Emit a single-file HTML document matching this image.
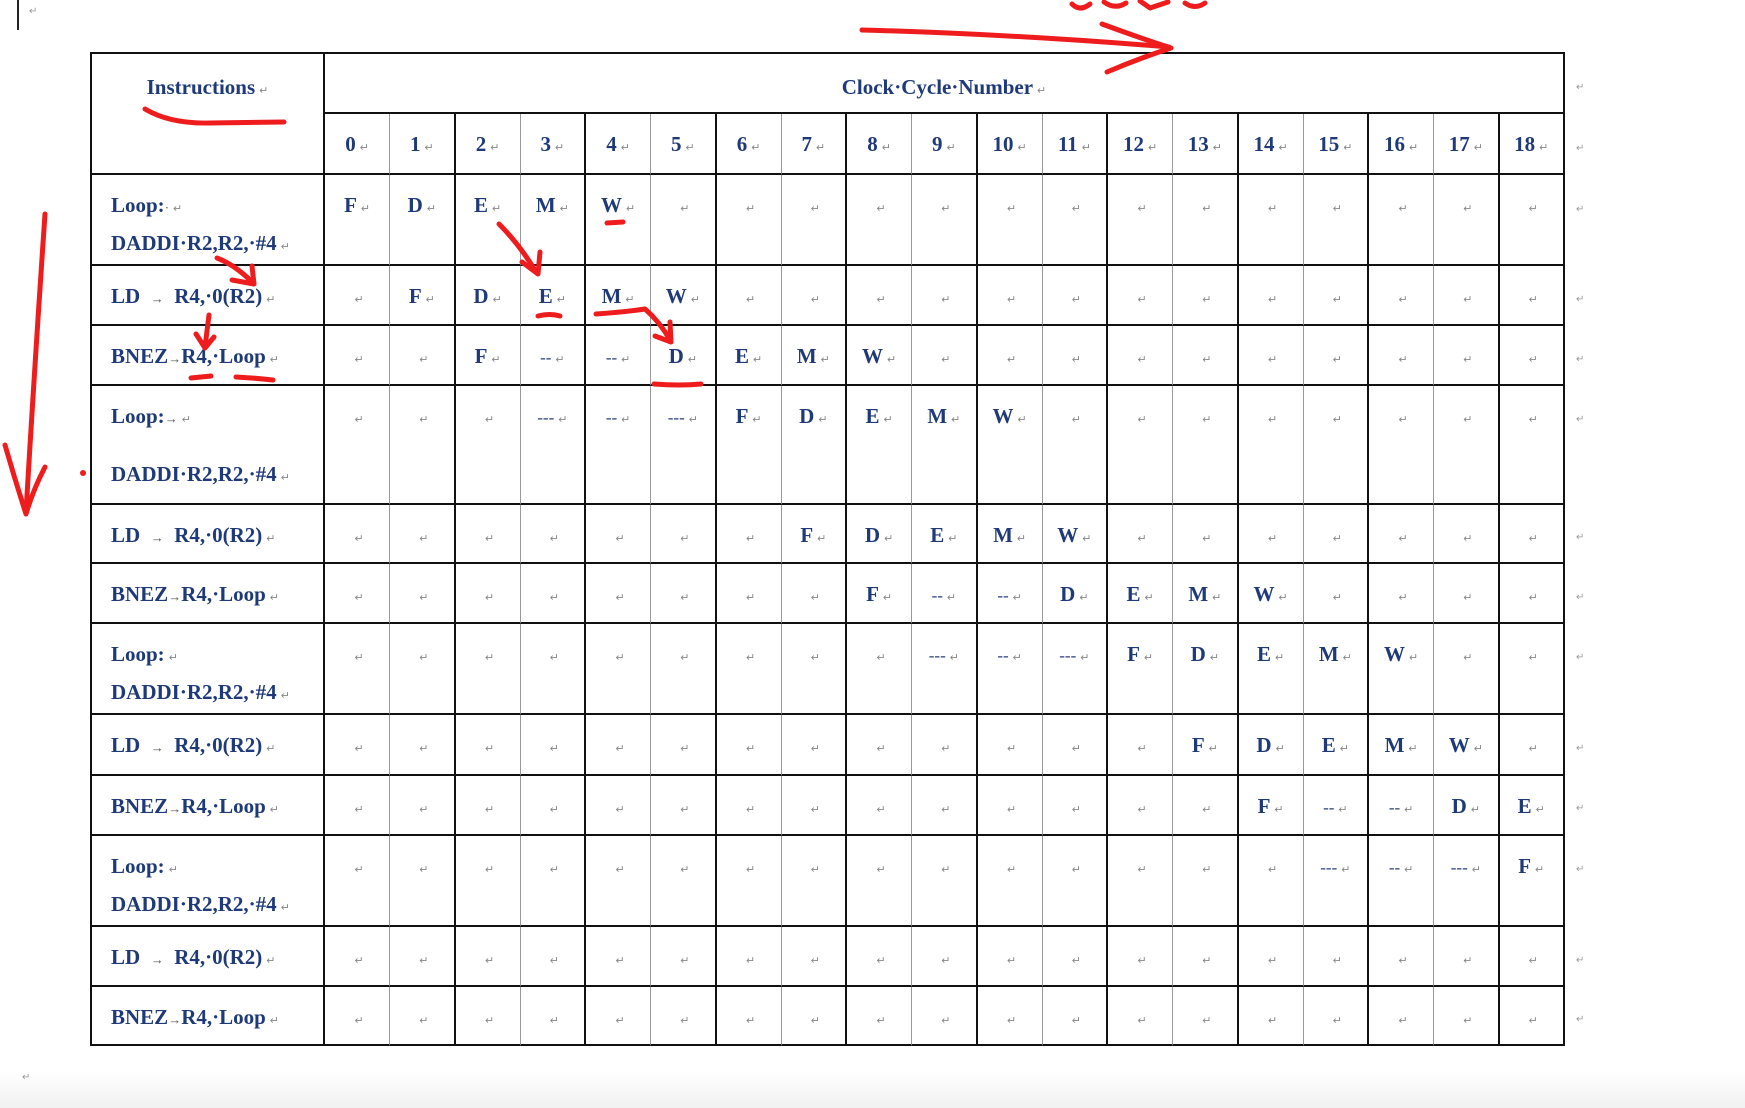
<!DOCTYPE html>
<html><head><meta charset="utf-8">
<style>
html,body{margin:0;padding:0;width:1745px;height:1108px;overflow:hidden;background:#fff;position:relative;font-family:"Liberation Serif",serif;}
#bot{position:absolute;left:0;top:1070px;width:1745px;height:38px;background:linear-gradient(#fff,#f1f1f1);}
table{position:absolute;left:90px;top:52px;width:1475px;border-collapse:separate;border-spacing:0;table-layout:fixed;border-top:2px solid #111;border-left:2px solid #111;}
td{border-right:2px solid #111;border-bottom:2px solid #111;padding:0;vertical-align:top;text-align:center;color:#1e3a78;font-weight:bold;font-size:21px;line-height:22px;box-sizing:border-box;}
td div.c{padding-top:19px;white-space:nowrap;}
i{font-style:normal;font-weight:normal;color:#888;font-size:11px;margin-left:4px;}
b{font-weight:normal;font-size:17px;color:#2a3f77;}
tr.r td:nth-child(even){border-right:1px solid #999;}
tr.r td:last-child{border-right:2px solid #111;}
tr.n td:nth-child(odd){border-right:1px solid #999;}
tr.n td:last-child{border-right:2px solid #111;}
td.ins{text-align:left;}
td.ins div{position:relative;white-space:nowrap;padding-left:19px;}
td.ins div span.b{position:absolute;left:19px;}
.dot{color:#555;font-weight:normal;font-size:13px;}
.rm{position:absolute;left:1576px;color:#999;font-size:10px;}
</style></head><body>
<div id="bot"></div>
<div style="position:absolute;left:17px;top:0;width:2px;height:30px;background:#222"></div>
<div style="position:absolute;left:29px;top:6px;color:#999;font-size:10px">↵</div>
<table>
<colgroup><col style="width:233px"><col span="19"></colgroup>
<tr style="height:60px"><td rowspan="2" style="vertical-align:top"><div class="c" style="padding-top:22px">Instructions<i>↵</i></div></td><td colspan="19"><div class="c" style="padding-top:22px">Clock·Cycle·Number<i>↵</i></div></td></tr>
<tr class="n" style="height:61px"><td><div class="c">0<i>↵</i></div></td><td><div class="c">1<i>↵</i></div></td><td><div class="c">2<i>↵</i></div></td><td><div class="c">3<i>↵</i></div></td><td><div class="c">4<i>↵</i></div></td><td><div class="c">5<i>↵</i></div></td><td><div class="c">6<i>↵</i></div></td><td><div class="c">7<i>↵</i></div></td><td><div class="c">8<i>↵</i></div></td><td><div class="c">9<i>↵</i></div></td><td><div class="c">10<i>↵</i></div></td><td><div class="c">11<i>↵</i></div></td><td><div class="c">12<i>↵</i></div></td><td><div class="c">13<i>↵</i></div></td><td><div class="c">14<i>↵</i></div></td><td><div class="c">15<i>↵</i></div></td><td><div class="c">16<i>↵</i></div></td><td><div class="c">17<i>↵</i></div></td><td><div class="c">18<i>↵</i></div></td></tr>

<tr class="r" style="height:91px"><td class="ins"><div style="height:89px;padding-top:19px;box-sizing:border-box">Loop:<span class="dot">·</span><i>↵</i><span class="b" style="bottom:6px">DADDI·R2,R2,·#4<i>↵</i></span></div></td><td><div class="c">F<i>↵</i></div></td><td><div class="c">D<i>↵</i></div></td><td><div class="c">E<i>↵</i></div></td><td><div class="c">M<i>↵</i></div></td><td><div class="c">W<i>↵</i></div></td><td><div class="c"><i>↵</i></div></td><td><div class="c"><i>↵</i></div></td><td><div class="c"><i>↵</i></div></td><td><div class="c"><i>↵</i></div></td><td><div class="c"><i>↵</i></div></td><td><div class="c"><i>↵</i></div></td><td><div class="c"><i>↵</i></div></td><td><div class="c"><i>↵</i></div></td><td><div class="c"><i>↵</i></div></td><td><div class="c"><i>↵</i></div></td><td><div class="c"><i>↵</i></div></td><td><div class="c"><i>↵</i></div></td><td><div class="c"><i>↵</i></div></td><td><div class="c"><i>↵</i></div></td></tr>

<tr class="r" style="height:60px"><td class="ins"><div style="padding-top:19px">LD &nbsp;<span class="dot">→</span> &nbsp;R4,·0(R2)<i>↵</i></div></td><td><div class="c"><i>↵</i></div></td><td><div class="c">F<i>↵</i></div></td><td><div class="c">D<i>↵</i></div></td><td><div class="c">E<i>↵</i></div></td><td><div class="c">M<i>↵</i></div></td><td><div class="c">W<i>↵</i></div></td><td><div class="c"><i>↵</i></div></td><td><div class="c"><i>↵</i></div></td><td><div class="c"><i>↵</i></div></td><td><div class="c"><i>↵</i></div></td><td><div class="c"><i>↵</i></div></td><td><div class="c"><i>↵</i></div></td><td><div class="c"><i>↵</i></div></td><td><div class="c"><i>↵</i></div></td><td><div class="c"><i>↵</i></div></td><td><div class="c"><i>↵</i></div></td><td><div class="c"><i>↵</i></div></td><td><div class="c"><i>↵</i></div></td><td><div class="c"><i>↵</i></div></td></tr>

<tr class="r" style="height:60px"><td class="ins"><div style="padding-top:19px">BNEZ<span class="dot">→</span>R4,·Loop<i>↵</i></div></td><td><div class="c"><i>↵</i></div></td><td><div class="c"><i>↵</i></div></td><td><div class="c">F<i>↵</i></div></td><td><div class="c"><b>--</b><i>↵</i></div></td><td><div class="c"><b>--</b><i>↵</i></div></td><td><div class="c">D<i>↵</i></div></td><td><div class="c">E<i>↵</i></div></td><td><div class="c">M<i>↵</i></div></td><td><div class="c">W<i>↵</i></div></td><td><div class="c"><i>↵</i></div></td><td><div class="c"><i>↵</i></div></td><td><div class="c"><i>↵</i></div></td><td><div class="c"><i>↵</i></div></td><td><div class="c"><i>↵</i></div></td><td><div class="c"><i>↵</i></div></td><td><div class="c"><i>↵</i></div></td><td><div class="c"><i>↵</i></div></td><td><div class="c"><i>↵</i></div></td><td><div class="c"><i>↵</i></div></td></tr>

<tr class="r" style="height:119px"><td class="ins"><div style="height:117px;padding-top:19px;box-sizing:border-box">Loop:<span class="dot">→</span><i>↵</i><span class="b" style="bottom:14px">DADDI·R2,R2,·#4<i>↵</i></span></div></td><td><div class="c"><i>↵</i></div></td><td><div class="c"><i>↵</i></div></td><td><div class="c"><i>↵</i></div></td><td><div class="c"><b>---</b><i>↵</i></div></td><td><div class="c"><b>--</b><i>↵</i></div></td><td><div class="c"><b>---</b><i>↵</i></div></td><td><div class="c">F<i>↵</i></div></td><td><div class="c">D<i>↵</i></div></td><td><div class="c">E<i>↵</i></div></td><td><div class="c">M<i>↵</i></div></td><td><div class="c">W<i>↵</i></div></td><td><div class="c"><i>↵</i></div></td><td><div class="c"><i>↵</i></div></td><td><div class="c"><i>↵</i></div></td><td><div class="c"><i>↵</i></div></td><td><div class="c"><i>↵</i></div></td><td><div class="c"><i>↵</i></div></td><td><div class="c"><i>↵</i></div></td><td><div class="c"><i>↵</i></div></td></tr>

<tr class="r" style="height:59px"><td class="ins"><div style="padding-top:19px">LD &nbsp;<span class="dot">→</span> &nbsp;R4,·0(R2)<i>↵</i></div></td><td><div class="c"><i>↵</i></div></td><td><div class="c"><i>↵</i></div></td><td><div class="c"><i>↵</i></div></td><td><div class="c"><i>↵</i></div></td><td><div class="c"><i>↵</i></div></td><td><div class="c"><i>↵</i></div></td><td><div class="c"><i>↵</i></div></td><td><div class="c">F<i>↵</i></div></td><td><div class="c">D<i>↵</i></div></td><td><div class="c">E<i>↵</i></div></td><td><div class="c">M<i>↵</i></div></td><td><div class="c">W<i>↵</i></div></td><td><div class="c"><i>↵</i></div></td><td><div class="c"><i>↵</i></div></td><td><div class="c"><i>↵</i></div></td><td><div class="c"><i>↵</i></div></td><td><div class="c"><i>↵</i></div></td><td><div class="c"><i>↵</i></div></td><td><div class="c"><i>↵</i></div></td></tr>

<tr class="r" style="height:60px"><td class="ins"><div style="padding-top:19px">BNEZ<span class="dot">→</span>R4,·Loop<i>↵</i></div></td><td><div class="c"><i>↵</i></div></td><td><div class="c"><i>↵</i></div></td><td><div class="c"><i>↵</i></div></td><td><div class="c"><i>↵</i></div></td><td><div class="c"><i>↵</i></div></td><td><div class="c"><i>↵</i></div></td><td><div class="c"><i>↵</i></div></td><td><div class="c"><i>↵</i></div></td><td><div class="c">F<i>↵</i></div></td><td><div class="c"><b>--</b><i>↵</i></div></td><td><div class="c"><b>--</b><i>↵</i></div></td><td><div class="c">D<i>↵</i></div></td><td><div class="c">E<i>↵</i></div></td><td><div class="c">M<i>↵</i></div></td><td><div class="c">W<i>↵</i></div></td><td><div class="c"><i>↵</i></div></td><td><div class="c"><i>↵</i></div></td><td><div class="c"><i>↵</i></div></td><td><div class="c"><i>↵</i></div></td></tr>

<tr class="r" style="height:91px"><td class="ins"><div style="height:89px;padding-top:19px;box-sizing:border-box">Loop:<i>↵</i><span class="b" style="bottom:6px">DADDI·R2,R2,·#4<i>↵</i></span></div></td><td><div class="c"><i>↵</i></div></td><td><div class="c"><i>↵</i></div></td><td><div class="c"><i>↵</i></div></td><td><div class="c"><i>↵</i></div></td><td><div class="c"><i>↵</i></div></td><td><div class="c"><i>↵</i></div></td><td><div class="c"><i>↵</i></div></td><td><div class="c"><i>↵</i></div></td><td><div class="c"><i>↵</i></div></td><td><div class="c"><b>---</b><i>↵</i></div></td><td><div class="c"><b>--</b><i>↵</i></div></td><td><div class="c"><b>---</b><i>↵</i></div></td><td><div class="c">F<i>↵</i></div></td><td><div class="c">D<i>↵</i></div></td><td><div class="c">E<i>↵</i></div></td><td><div class="c">M<i>↵</i></div></td><td><div class="c">W<i>↵</i></div></td><td><div class="c"><i>↵</i></div></td><td><div class="c"><i>↵</i></div></td></tr>

<tr class="r" style="height:61px"><td class="ins"><div style="padding-top:19px">LD &nbsp;<span class="dot">→</span> &nbsp;R4,·0(R2)<i>↵</i></div></td><td><div class="c"><i>↵</i></div></td><td><div class="c"><i>↵</i></div></td><td><div class="c"><i>↵</i></div></td><td><div class="c"><i>↵</i></div></td><td><div class="c"><i>↵</i></div></td><td><div class="c"><i>↵</i></div></td><td><div class="c"><i>↵</i></div></td><td><div class="c"><i>↵</i></div></td><td><div class="c"><i>↵</i></div></td><td><div class="c"><i>↵</i></div></td><td><div class="c"><i>↵</i></div></td><td><div class="c"><i>↵</i></div></td><td><div class="c"><i>↵</i></div></td><td><div class="c">F<i>↵</i></div></td><td><div class="c">D<i>↵</i></div></td><td><div class="c">E<i>↵</i></div></td><td><div class="c">M<i>↵</i></div></td><td><div class="c">W<i>↵</i></div></td><td><div class="c"><i>↵</i></div></td></tr>

<tr class="r" style="height:60px"><td class="ins"><div style="padding-top:19px">BNEZ<span class="dot">→</span>R4,·Loop<i>↵</i></div></td><td><div class="c"><i>↵</i></div></td><td><div class="c"><i>↵</i></div></td><td><div class="c"><i>↵</i></div></td><td><div class="c"><i>↵</i></div></td><td><div class="c"><i>↵</i></div></td><td><div class="c"><i>↵</i></div></td><td><div class="c"><i>↵</i></div></td><td><div class="c"><i>↵</i></div></td><td><div class="c"><i>↵</i></div></td><td><div class="c"><i>↵</i></div></td><td><div class="c"><i>↵</i></div></td><td><div class="c"><i>↵</i></div></td><td><div class="c"><i>↵</i></div></td><td><div class="c"><i>↵</i></div></td><td><div class="c">F<i>↵</i></div></td><td><div class="c"><b>--</b><i>↵</i></div></td><td><div class="c"><b>--</b><i>↵</i></div></td><td><div class="c">D<i>↵</i></div></td><td><div class="c">E<i>↵</i></div></td></tr>

<tr class="r" style="height:91px"><td class="ins"><div style="height:89px;padding-top:19px;box-sizing:border-box">Loop:<i>↵</i><span class="b" style="bottom:6px">DADDI·R2,R2,·#4<i>↵</i></span></div></td><td><div class="c"><i>↵</i></div></td><td><div class="c"><i>↵</i></div></td><td><div class="c"><i>↵</i></div></td><td><div class="c"><i>↵</i></div></td><td><div class="c"><i>↵</i></div></td><td><div class="c"><i>↵</i></div></td><td><div class="c"><i>↵</i></div></td><td><div class="c"><i>↵</i></div></td><td><div class="c"><i>↵</i></div></td><td><div class="c"><i>↵</i></div></td><td><div class="c"><i>↵</i></div></td><td><div class="c"><i>↵</i></div></td><td><div class="c"><i>↵</i></div></td><td><div class="c"><i>↵</i></div></td><td><div class="c"><i>↵</i></div></td><td><div class="c"><b>---</b><i>↵</i></div></td><td><div class="c"><b>--</b><i>↵</i></div></td><td><div class="c"><b>---</b><i>↵</i></div></td><td><div class="c">F<i>↵</i></div></td></tr>

<tr class="r" style="height:60px"><td class="ins"><div style="padding-top:19px">LD &nbsp;<span class="dot">→</span> &nbsp;R4,·0(R2)<i>↵</i></div></td><td><div class="c"><i>↵</i></div></td><td><div class="c"><i>↵</i></div></td><td><div class="c"><i>↵</i></div></td><td><div class="c"><i>↵</i></div></td><td><div class="c"><i>↵</i></div></td><td><div class="c"><i>↵</i></div></td><td><div class="c"><i>↵</i></div></td><td><div class="c"><i>↵</i></div></td><td><div class="c"><i>↵</i></div></td><td><div class="c"><i>↵</i></div></td><td><div class="c"><i>↵</i></div></td><td><div class="c"><i>↵</i></div></td><td><div class="c"><i>↵</i></div></td><td><div class="c"><i>↵</i></div></td><td><div class="c"><i>↵</i></div></td><td><div class="c"><i>↵</i></div></td><td><div class="c"><i>↵</i></div></td><td><div class="c"><i>↵</i></div></td><td><div class="c"><i>↵</i></div></td></tr>

<tr class="r" style="height:59px"><td class="ins"><div style="padding-top:19px">BNEZ<span class="dot">→</span>R4,·Loop<i>↵</i></div></td><td><div class="c"><i>↵</i></div></td><td><div class="c"><i>↵</i></div></td><td><div class="c"><i>↵</i></div></td><td><div class="c"><i>↵</i></div></td><td><div class="c"><i>↵</i></div></td><td><div class="c"><i>↵</i></div></td><td><div class="c"><i>↵</i></div></td><td><div class="c"><i>↵</i></div></td><td><div class="c"><i>↵</i></div></td><td><div class="c"><i>↵</i></div></td><td><div class="c"><i>↵</i></div></td><td><div class="c"><i>↵</i></div></td><td><div class="c"><i>↵</i></div></td><td><div class="c"><i>↵</i></div></td><td><div class="c"><i>↵</i></div></td><td><div class="c"><i>↵</i></div></td><td><div class="c"><i>↵</i></div></td><td><div class="c"><i>↵</i></div></td><td><div class="c"><i>↵</i></div></td></tr>
</table>

<div class="rm" style="top:82px">↵</div><div class="rm" style="top:143px">↵</div><div class="rm" style="top:204px">↵</div>
<div class="rm" style="top:294px">↵</div><div class="rm" style="top:354px">↵</div><div class="rm" style="top:414px">↵</div>
<div class="rm" style="top:532px">↵</div><div class="rm" style="top:592px">↵</div><div class="rm" style="top:652px">↵</div>
<div class="rm" style="top:743px">↵</div><div class="rm" style="top:803px">↵</div><div class="rm" style="top:864px">↵</div>
<div class="rm" style="top:955px">↵</div><div class="rm" style="top:1014px">↵</div>
<div style="position:absolute;left:22px;top:1072px;color:#999;font-size:10px">↵</div>

<svg width="1745" height="1108" style="position:absolute;left:0;top:0" fill="none" stroke="#ee1c1c" stroke-linecap="round" stroke-linejoin="round">
<g stroke-width="5">
<path d="M1072 4 Q1080 12 1090 4 M1104 2 Q1115 10 1126 3 M1140 1 L1150 8 L1168 2 M1185 3 Q1195 10 1205 3"/>
<path d="M862 30 Q1010 34 1169 47"/>
<path d="M1102 24 Q1140 38 1171 48 Q1140 58 1107 72"/>
<path d="M145 109 Q170 124 210 123 L284 122"/>
<path d="M45 214 Q35 360 26 512"/>
<path d="M5 445 Q15 480 26 514 Q33 490 45 467"/>
<path d="M607 223 L623 222"/>
<path d="M499 224 Q520 245 536 272"/>
<path d="M522 262 L538 274 L540 252"/>
<path d="M217 258 Q235 265 252 282"/>
<path d="M232 280 L254 284 L252 266"/>
<path d="M538 316 Q550 313 560 316"/>
<path d="M596 314 Q625 312 645 309 Q660 322 670 340"/>
<path d="M655 336 L671 342 L670 322"/>
<path d="M209 315 L205 347"/>
<path d="M196 334 L205 348 L214 337"/>
<path d="M191 378 L211 376 M236 377 Q255 378 273 380"/>
<path d="M654 384 Q680 386 701 384"/>
</g>
<circle cx="83" cy="473" r="3" fill="#ee1c1c" stroke="none"/>
</svg>
</body></html>
